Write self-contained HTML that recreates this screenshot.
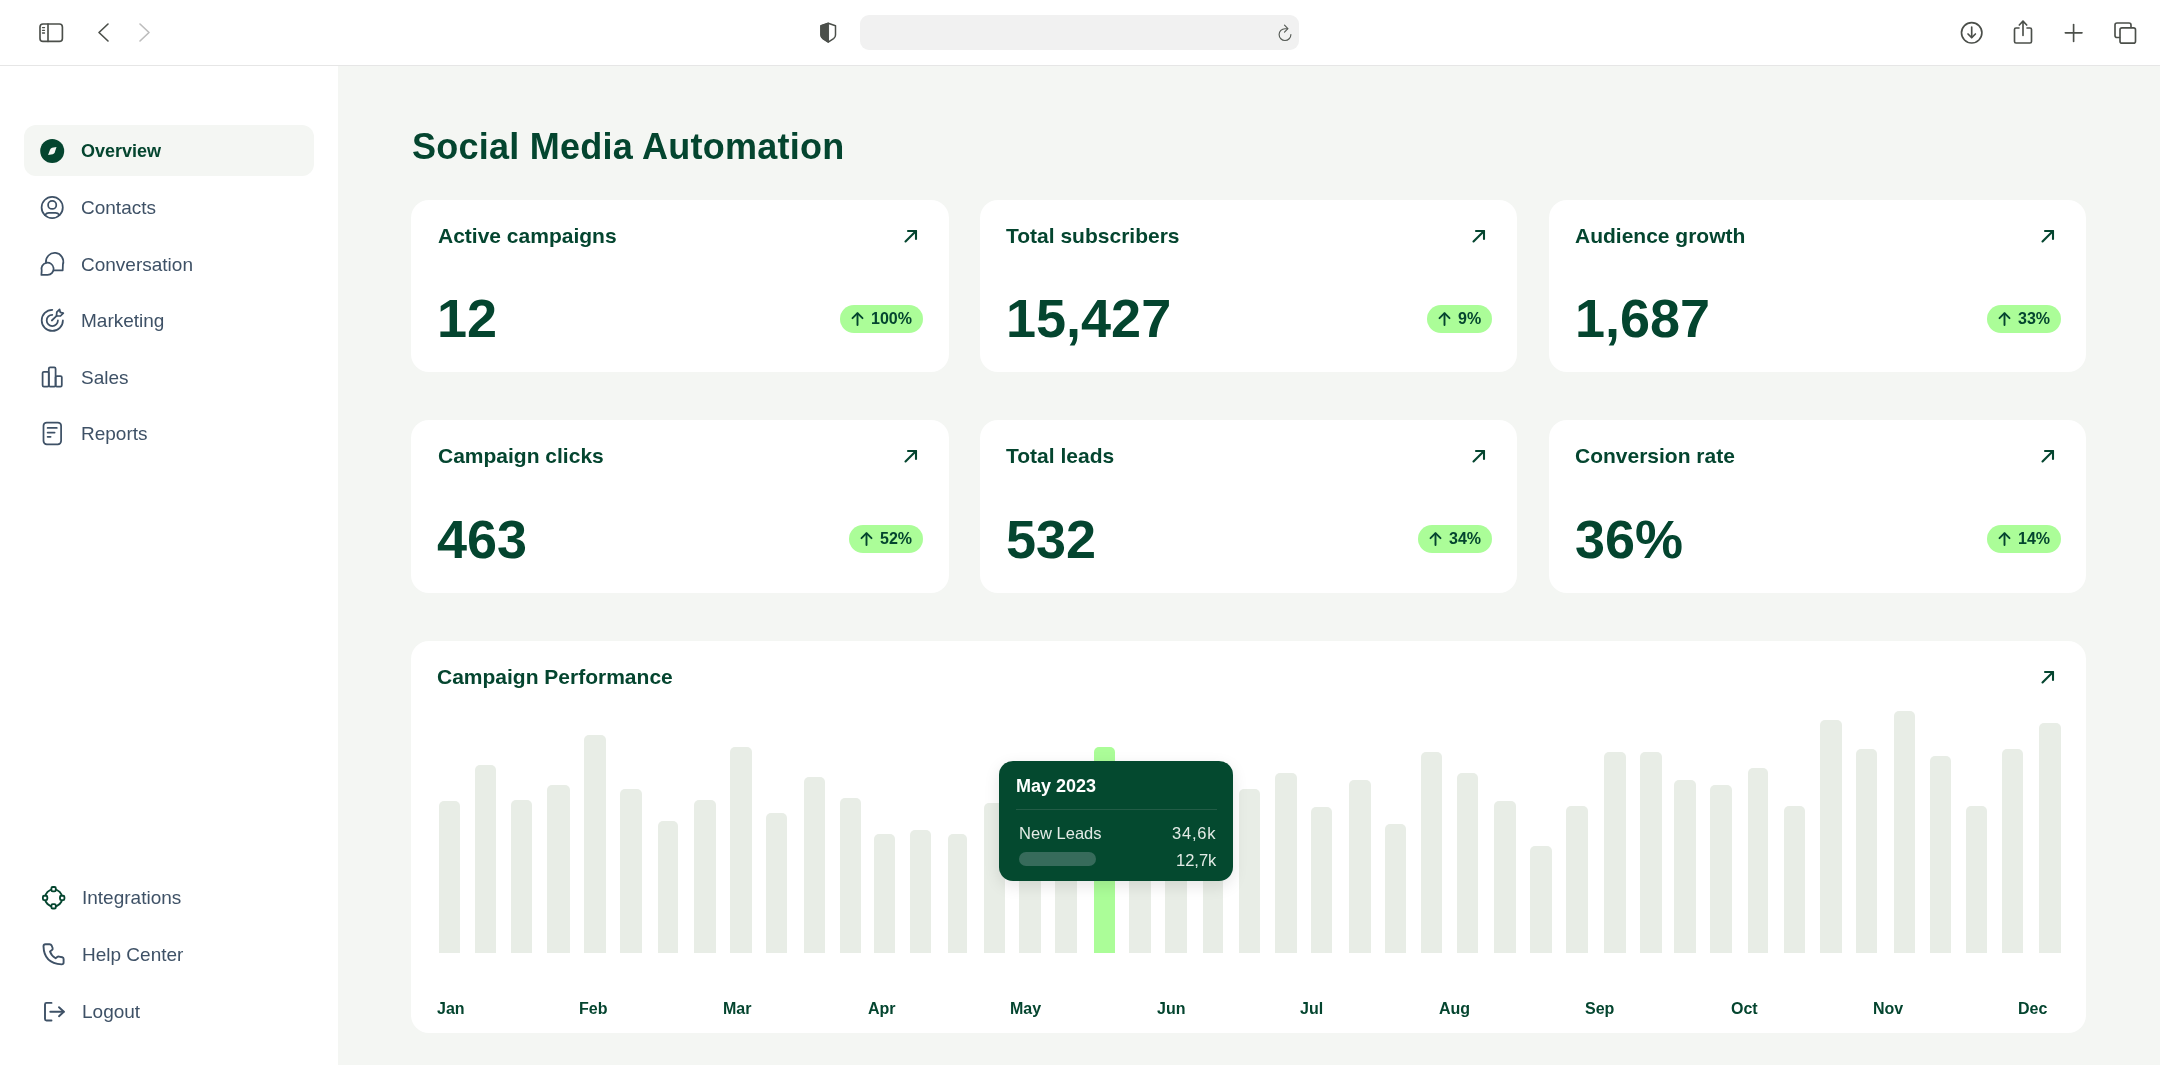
<!DOCTYPE html>
<html><head><meta charset="utf-8"><title>Social Media Automation</title>
<style>
*{margin:0;padding:0;box-sizing:border-box}
html,body{width:2160px;height:1065px;overflow:hidden;background:#fff;font-family:"Liberation Sans",sans-serif}
.a{position:absolute}
.t{position:absolute;line-height:1;white-space:nowrap;will-change:transform}
svg{position:absolute;overflow:visible}
</style></head><body>
<div class="a" style="left:0;top:0;width:2160px;height:65px;background:#fff"></div><div class="a" style="left:0;top:64.6px;width:2160px;height:1.5px;background:#e6e6e6"></div><div class="a" style="left:337.5px;top:66px;width:1822.5px;height:999px;background:#f4f6f3"></div><svg style="left:0;top:0" width="2160" height="65" viewBox="0 0 2160 65" fill="none" stroke="#4b4f4a" stroke-width="1.65" stroke-linecap="round" stroke-linejoin="round">
<rect x="40" y="24" width="22.4" height="17.4" rx="3"/>
<line x1="48" y1="24" x2="48" y2="41.5"/>
<line x1="42.5" y1="27.6" x2="44.5" y2="27.6" stroke-width="1.3"/>
<line x1="42.5" y1="30.3" x2="44.5" y2="30.3" stroke-width="1.3"/>
<line x1="42.5" y1="33" x2="44.5" y2="33" stroke-width="1.3"/>
<polyline points="108,24 99,32.5 108,41"/>
<polyline points="140,24 149,32.5 140,41" stroke="#bdbdbd"/>
<path d="M828.2,23.2 L835.5,25.7 L835.5,35 Q835.5,37.2 833.6,38.6 L828.2,42.1 L822.8,38.6 Q820.9,37.2 820.9,35 L820.9,25.7 Z" stroke-width="1.5"/>
<path d="M828.2,23.2 L820.9,25.7 L820.9,35 Q820.9,37.2 822.8,38.6 L828.2,42.1 Z" fill="#4b4f4a" stroke="#4b4f4a" stroke-width="1"/>
<circle cx="1971.7" cy="32.8" r="10.2" stroke-width="1.65"/>
<polyline points="1971.7,27 1971.7,37.5" stroke-width="1.65"/>
<polyline points="1968,34 1971.7,37.6 1975.4,34" stroke-width="1.65"/>
<path d="M2019,28 L2016,28 Q2014.5,28 2014.5,29.5 L2014.5,41.5 Q2014.5,43 2016,43 L2030,43 Q2031.5,43 2031.5,41.5 L2031.5,29.5 Q2031.5,28 2030,28 L2027,28" stroke-width="1.65"/>
<polyline points="2023,35.5 2023,21.5" stroke-width="1.65"/>
<polyline points="2019.3,25 2023,21.2 2026.7,25" stroke-width="1.65"/>
<line x1="2073.6" y1="24.5" x2="2073.6" y2="41.5" stroke-width="1.65"/>
<line x1="2065.3" y1="32.8" x2="2082" y2="32.8" stroke-width="1.65"/>
<path d="M2119.5,37.5 L2117,37.5 Q2115,37.5 2115,35.5 L2115,25 Q2115,23 2117,23 L2129,23 Q2131,23 2131,25 L2131,27.5" stroke-width="1.65"/>
<rect x="2120" y="27.8" width="15.5" height="15.4" rx="2" stroke-width="1.65"/>
</svg>
<div class="a" style="left:860px;top:15px;width:439px;height:34.5px;border-radius:9px;background:#f1f1f1"></div><svg style="left:1276px;top:24px" width="18" height="18" viewBox="0 0 18 18" fill="none" stroke="#555a55" stroke-width="1.15" stroke-linecap="round" stroke-linejoin="round">
<path d="M14.9,10.6 A5.9,5.9 0 1 1 9,4.7 L11.6,4.7"/>
<polyline points="8.5,1.2 11.9,4.7 8.5,8.1"/>
</svg>
<div class="a" style="left:24px;top:125px;width:290px;height:51px;border-radius:12px;background:#f4f6f3"></div><div class="t" style="left:81px;top:142.36px;font-size:18px;font-weight:700;color:#04452f;">Overview</div>
<div class="t" style="left:81px;top:198.12px;font-size:19px;font-weight:400;color:#3e5166;">Contacts</div>
<div class="t" style="left:81px;top:254.72px;font-size:19px;font-weight:400;color:#3e5166;">Conversation</div>
<div class="t" style="left:81px;top:311.32px;font-size:19px;font-weight:400;color:#3e5166;">Marketing</div>
<div class="t" style="left:81px;top:367.72px;font-size:19px;font-weight:400;color:#3e5166;">Sales</div>
<div class="t" style="left:81px;top:424.12px;font-size:19px;font-weight:400;color:#3e5166;">Reports</div>
<svg style="left:0;top:0" width="338" height="1065" viewBox="0 0 338 1065" fill="none" stroke="#3e5166" stroke-width="1.75" stroke-linecap="round" stroke-linejoin="round">
<circle cx="52.2" cy="151" r="12" fill="#04452f" stroke="none"/>
<path d="M48.1,155.1 L50,149.7 Q50.6,148.2 52.1,147.8 L56.5,146.9 L54.8,152.3 Q54.3,153.8 52.7,154.3 Z" fill="#f4f6f3" stroke="none"/>
<circle cx="52.2" cy="207.5" r="10.6"/>
<circle cx="52.2" cy="204.9" r="4.1"/>
<path d="M44.9,215 Q46.6,212.9 48.8,212.9 L55.6,212.9 Q57.8,212.9 59.5,215"/>
<path d="M46,262.6 A8.7,8.7 0 1 1 62.9,264.4 L62.7,270.3 L53.7,270.3"/>
<path d="M41.7,270.6 A6.1,6.1 0 1 1 47.6,274.9 L41.4,274.9 Z"/>
<path d="M52.3,309.8 A10.6,10.6 0 1 0 62.9,320.4"/>
<path d="M52.3,314.8 A5.6,5.6 0 1 0 57.9,320.4"/>
<line x1="51.8" y1="320.5" x2="56.6" y2="315.9"/>
<path d="M56.5,315.8 L56.8,312.2 L59.6,309.4 L60.3,312.4 L63.3,313.2 L60.5,316 Z"/>
<rect x="42.6" y="371.8" width="6.2" height="14.8" rx="1.3"/>
<rect x="48.8" y="367.4" width="6.8" height="19.2" rx="1.3"/>
<rect x="55.6" y="376" width="6.2" height="10.6" rx="1.3"/>
<rect x="43.5" y="422.5" width="17.6" height="21.8" rx="3.3"/>
<line x1="47.6" y1="427.9" x2="56.8" y2="427.9"/>
<line x1="47.6" y1="432.5" x2="54.6" y2="432.5"/>
<line x1="47.6" y1="436.8" x2="50.6" y2="436.8"/>
<g stroke="#04452f" stroke-width="1.85">
<circle cx="53.6" cy="897.9" r="8.6"/>
<rect x="51.4" y="887" width="4.4" height="4.4" rx="1.3" fill="#fff"/>
<rect x="51.4" y="904.1" width="4.4" height="4.4" rx="1.3" fill="#fff"/>
<rect x="42.9" y="895.7" width="4.4" height="4.4" rx="1.3" fill="#fff"/>
<rect x="60" y="895.7" width="4.4" height="4.4" rx="1.3" fill="#fff"/>
</g>
<g stroke-width="1.9">
<path d="M45.5,944.2 L49.5,944.2 Q51,944.2 51.6,945.5 L52.6,948 Q53,949.3 52,950 L50,951.5 Q51.2,955.5 55.6,958.2 L57.2,957 Q58,956.4 59,956.6 L62.3,957.3 Q63.6,957.6 63.6,959 L63.6,962.6 Q63.6,964.4 61.6,964.4 Q44,963.5 43.5,946.3 Q43.5,944.2 45.5,944.2 Z"/>
<path d="M51.5,1002.9 L46.5,1002.9 Q45,1002.9 45,1004.4 L45,1019 Q45,1020.5 46.5,1020.5 L51.5,1020.5"/>
<line x1="50.3" y1="1011.7" x2="63.8" y2="1011.7"/>
<polyline points="59,1007.2 63.8,1011.7 59,1016.2"/>
</g>
</svg>
<div class="t" style="left:82.4px;top:888.22px;font-size:19px;font-weight:400;color:#3e5166;">Integrations</div>
<div class="t" style="left:82.4px;top:944.62px;font-size:19px;font-weight:400;color:#3e5166;">Help Center</div>
<div class="t" style="left:82.4px;top:1002.12px;font-size:19px;font-weight:400;color:#3e5166;">Logout</div>
<div class="t" style="left:412px;top:128.53px;font-size:36px;font-weight:700;color:#04452f;letter-spacing:0.25px;">Social Media Automation</div>
<div class="a" style="left:411px;top:199.6px;width:537.8px;height:172.7px;border-radius:18px;background:#fff"></div><div class="t" style="left:437.5px;top:224.72px;font-size:21px;font-weight:700;color:#04452f;">Active campaigns</div>
<div class="t" style="left:437px;top:291.49px;font-size:54px;font-weight:700;color:#04452f;">12</div>
<svg style="left:903.5px;top:228.6px" width="14" height="14" viewBox="0 0 14 14" fill="none" stroke="#04452f" stroke-width="2.1" stroke-linecap="round" stroke-linejoin="round"><line x1="1.5" y1="12.5" x2="12" y2="2"/><polyline points="4,2 12,2 12,10"/></svg><div class="a" style="right:1236.9px;top:304.6px;height:28px;border-radius:14px;background:#abfd98;display:flex;align-items:center;padding:0 11px 0 11px;will-change:transform"><svg style="position:relative" width="13" height="14" viewBox="0 0 13 14" fill="none" stroke="#04452f" stroke-width="1.9" stroke-linecap="round" stroke-linejoin="round"><line x1="6.5" y1="1.5" x2="6.5" y2="13"/><polyline points="1.5,6.2 6.5,1.2 11.5,6.2"/></svg><span style="font-size:16px;font-weight:700;color:#04452f;margin-left:7px;line-height:1">100%</span></div>
<div class="a" style="left:979.6px;top:199.6px;width:537.8px;height:172.7px;border-radius:18px;background:#fff"></div><div class="t" style="left:1006.1px;top:224.72px;font-size:21px;font-weight:700;color:#04452f;">Total subscribers</div>
<div class="t" style="left:1005.6px;top:291.49px;font-size:54px;font-weight:700;color:#04452f;">15,427</div>
<svg style="left:1472.1px;top:228.6px" width="14" height="14" viewBox="0 0 14 14" fill="none" stroke="#04452f" stroke-width="2.1" stroke-linecap="round" stroke-linejoin="round"><line x1="1.5" y1="12.5" x2="12" y2="2"/><polyline points="4,2 12,2 12,10"/></svg><div class="a" style="right:668.3px;top:304.6px;height:28px;border-radius:14px;background:#abfd98;display:flex;align-items:center;padding:0 11px 0 11px;will-change:transform"><svg style="position:relative" width="13" height="14" viewBox="0 0 13 14" fill="none" stroke="#04452f" stroke-width="1.9" stroke-linecap="round" stroke-linejoin="round"><line x1="6.5" y1="1.5" x2="6.5" y2="13"/><polyline points="1.5,6.2 6.5,1.2 11.5,6.2"/></svg><span style="font-size:16px;font-weight:700;color:#04452f;margin-left:7px;line-height:1">9%</span></div>
<div class="a" style="left:1548.5px;top:199.6px;width:537.8px;height:172.7px;border-radius:18px;background:#fff"></div><div class="t" style="left:1575.0px;top:224.72px;font-size:21px;font-weight:700;color:#04452f;">Audience growth</div>
<div class="t" style="left:1574.5px;top:291.49px;font-size:54px;font-weight:700;color:#04452f;">1,687</div>
<svg style="left:2041.0px;top:228.6px" width="14" height="14" viewBox="0 0 14 14" fill="none" stroke="#04452f" stroke-width="2.1" stroke-linecap="round" stroke-linejoin="round"><line x1="1.5" y1="12.5" x2="12" y2="2"/><polyline points="4,2 12,2 12,10"/></svg><div class="a" style="right:99.39999999999964px;top:304.6px;height:28px;border-radius:14px;background:#abfd98;display:flex;align-items:center;padding:0 11px 0 11px;will-change:transform"><svg style="position:relative" width="13" height="14" viewBox="0 0 13 14" fill="none" stroke="#04452f" stroke-width="1.9" stroke-linecap="round" stroke-linejoin="round"><line x1="6.5" y1="1.5" x2="6.5" y2="13"/><polyline points="1.5,6.2 6.5,1.2 11.5,6.2"/></svg><span style="font-size:16px;font-weight:700;color:#04452f;margin-left:7px;line-height:1">33%</span></div>
<div class="a" style="left:411px;top:420.1px;width:537.8px;height:172.7px;border-radius:18px;background:#fff"></div><div class="t" style="left:437.5px;top:445.22px;font-size:21px;font-weight:700;color:#04452f;">Campaign clicks</div>
<div class="t" style="left:437px;top:511.99px;font-size:54px;font-weight:700;color:#04452f;">463</div>
<svg style="left:903.5px;top:449.1px" width="14" height="14" viewBox="0 0 14 14" fill="none" stroke="#04452f" stroke-width="2.1" stroke-linecap="round" stroke-linejoin="round"><line x1="1.5" y1="12.5" x2="12" y2="2"/><polyline points="4,2 12,2 12,10"/></svg><div class="a" style="right:1236.9px;top:525.1px;height:28px;border-radius:14px;background:#abfd98;display:flex;align-items:center;padding:0 11px 0 11px;will-change:transform"><svg style="position:relative" width="13" height="14" viewBox="0 0 13 14" fill="none" stroke="#04452f" stroke-width="1.9" stroke-linecap="round" stroke-linejoin="round"><line x1="6.5" y1="1.5" x2="6.5" y2="13"/><polyline points="1.5,6.2 6.5,1.2 11.5,6.2"/></svg><span style="font-size:16px;font-weight:700;color:#04452f;margin-left:7px;line-height:1">52%</span></div>
<div class="a" style="left:979.6px;top:420.1px;width:537.8px;height:172.7px;border-radius:18px;background:#fff"></div><div class="t" style="left:1006.1px;top:445.22px;font-size:21px;font-weight:700;color:#04452f;">Total leads</div>
<div class="t" style="left:1005.6px;top:511.99px;font-size:54px;font-weight:700;color:#04452f;">532</div>
<svg style="left:1472.1px;top:449.1px" width="14" height="14" viewBox="0 0 14 14" fill="none" stroke="#04452f" stroke-width="2.1" stroke-linecap="round" stroke-linejoin="round"><line x1="1.5" y1="12.5" x2="12" y2="2"/><polyline points="4,2 12,2 12,10"/></svg><div class="a" style="right:668.3px;top:525.1px;height:28px;border-radius:14px;background:#abfd98;display:flex;align-items:center;padding:0 11px 0 11px;will-change:transform"><svg style="position:relative" width="13" height="14" viewBox="0 0 13 14" fill="none" stroke="#04452f" stroke-width="1.9" stroke-linecap="round" stroke-linejoin="round"><line x1="6.5" y1="1.5" x2="6.5" y2="13"/><polyline points="1.5,6.2 6.5,1.2 11.5,6.2"/></svg><span style="font-size:16px;font-weight:700;color:#04452f;margin-left:7px;line-height:1">34%</span></div>
<div class="a" style="left:1548.5px;top:420.1px;width:537.8px;height:172.7px;border-radius:18px;background:#fff"></div><div class="t" style="left:1575.0px;top:445.22px;font-size:21px;font-weight:700;color:#04452f;">Conversion rate</div>
<div class="t" style="left:1574.5px;top:511.99px;font-size:54px;font-weight:700;color:#04452f;">36%</div>
<svg style="left:2041.0px;top:449.1px" width="14" height="14" viewBox="0 0 14 14" fill="none" stroke="#04452f" stroke-width="2.1" stroke-linecap="round" stroke-linejoin="round"><line x1="1.5" y1="12.5" x2="12" y2="2"/><polyline points="4,2 12,2 12,10"/></svg><div class="a" style="right:99.39999999999964px;top:525.1px;height:28px;border-radius:14px;background:#abfd98;display:flex;align-items:center;padding:0 11px 0 11px;will-change:transform"><svg style="position:relative" width="13" height="14" viewBox="0 0 13 14" fill="none" stroke="#04452f" stroke-width="1.9" stroke-linecap="round" stroke-linejoin="round"><line x1="6.5" y1="1.5" x2="6.5" y2="13"/><polyline points="1.5,6.2 6.5,1.2 11.5,6.2"/></svg><span style="font-size:16px;font-weight:700;color:#04452f;margin-left:7px;line-height:1">14%</span></div>
<div class="a" style="left:411px;top:640.7px;width:1675.2px;height:392px;border-radius:18px;background:#fff"></div><div class="t" style="left:436.6px;top:665.72px;font-size:21px;font-weight:700;color:#04452f;">Campaign Performance</div>
<svg style="left:2041px;top:669.7px" width="14" height="14" viewBox="0 0 14 14" fill="none" stroke="#04452f" stroke-width="2.1" stroke-linecap="round" stroke-linejoin="round"><line x1="1.5" y1="12.5" x2="12" y2="2"/><polyline points="4,2 12,2 12,10"/></svg><div class="a" style="left:438.8px;top:800.9px;width:21.20px;height:151.80px;border-radius:5px 5px 0 0;background:#e8ede6"></div><div class="a" style="left:474.7px;top:765.2px;width:21.20px;height:187.50px;border-radius:5px 5px 0 0;background:#e8ede6"></div><div class="a" style="left:510.6px;top:799.6px;width:21.20px;height:153.10px;border-radius:5px 5px 0 0;background:#e8ede6"></div><div class="a" style="left:546.5px;top:784.7px;width:23.30px;height:168.00px;border-radius:5px 5px 0 0;background:#e8ede6"></div><div class="a" style="left:584.2px;top:734.9px;width:21.60px;height:217.80px;border-radius:5px 5px 0 0;background:#e8ede6"></div><div class="a" style="left:620.1px;top:789.1px;width:21.70px;height:163.60px;border-radius:5px 5px 0 0;background:#e8ede6"></div><div class="a" style="left:657.9px;top:820.6px;width:20.00px;height:132.10px;border-radius:5px 5px 0 0;background:#e8ede6"></div><div class="a" style="left:694.0px;top:799.6px;width:21.70px;height:153.10px;border-radius:5px 5px 0 0;background:#e8ede6"></div><div class="a" style="left:730.1px;top:747.1px;width:21.50px;height:205.60px;border-radius:5px 5px 0 0;background:#e8ede6"></div><div class="a" style="left:766.0px;top:813.1px;width:21.30px;height:139.60px;border-radius:5px 5px 0 0;background:#e8ede6"></div><div class="a" style="left:803.9px;top:777.2px;width:21.20px;height:175.50px;border-radius:5px 5px 0 0;background:#e8ede6"></div><div class="a" style="left:840.0px;top:798.3px;width:21.00px;height:154.40px;border-radius:5px 5px 0 0;background:#e8ede6"></div><div class="a" style="left:874.0px;top:834.3px;width:21.20px;height:118.40px;border-radius:5px 5px 0 0;background:#e8ede6"></div><div class="a" style="left:910.0px;top:830.0px;width:21.00px;height:122.70px;border-radius:5px 5px 0 0;background:#e8ede6"></div><div class="a" style="left:947.9px;top:834.3px;width:19.00px;height:118.40px;border-radius:5px 5px 0 0;background:#e8ede6"></div><div class="a" style="left:984.0px;top:803.1px;width:21.00px;height:149.60px;border-radius:5px 5px 0 0;background:#e8ede6"></div><div class="a" style="left:1019.3px;top:812px;width:21.70px;height:140.70px;border-radius:5px 5px 0 0;background:#e8ede6"></div><div class="a" style="left:1055.4px;top:790px;width:21.50px;height:162.70px;border-radius:5px 5px 0 0;background:#e8ede6"></div><div class="a" style="left:1093.75px;top:747.3px;width:20.85px;height:205.40px;border-radius:5px 5px 0 0;background:#abfd98"></div><div class="a" style="left:1129.0px;top:800px;width:21.80px;height:152.70px;border-radius:5px 5px 0 0;background:#e8ede6"></div><div class="a" style="left:1165.0px;top:790px;width:21.80px;height:162.70px;border-radius:5px 5px 0 0;background:#e8ede6"></div><div class="a" style="left:1203.1px;top:805px;width:19.80px;height:147.70px;border-radius:5px 5px 0 0;background:#e8ede6"></div><div class="a" style="left:1239.0px;top:789.4px;width:21.40px;height:163.30px;border-radius:5px 5px 0 0;background:#e8ede6"></div><div class="a" style="left:1275.0px;top:772.9px;width:21.50px;height:179.80px;border-radius:5px 5px 0 0;background:#e8ede6"></div><div class="a" style="left:1311.0px;top:807.4px;width:21.30px;height:145.30px;border-radius:5px 5px 0 0;background:#e8ede6"></div><div class="a" style="left:1348.75px;top:780.0px;width:22.05px;height:172.70px;border-radius:5px 5px 0 0;background:#e8ede6"></div><div class="a" style="left:1384.8px;top:823.9px;width:21.20px;height:128.80px;border-radius:5px 5px 0 0;background:#e8ede6"></div><div class="a" style="left:1421.0px;top:751.6px;width:20.80px;height:201.10px;border-radius:5px 5px 0 0;background:#e8ede6"></div><div class="a" style="left:1456.9px;top:772.9px;width:21.00px;height:179.80px;border-radius:5px 5px 0 0;background:#e8ede6"></div><div class="a" style="left:1494.2px;top:801.1px;width:21.60px;height:151.60px;border-radius:5px 5px 0 0;background:#e8ede6"></div><div class="a" style="left:1530.2px;top:846.4px;width:21.50px;height:106.30px;border-radius:5px 5px 0 0;background:#e8ede6"></div><div class="a" style="left:1566.25px;top:805.9px;width:21.65px;height:146.80px;border-radius:5px 5px 0 0;background:#e8ede6"></div><div class="a" style="left:1604.2px;top:751.6px;width:21.50px;height:201.10px;border-radius:5px 5px 0 0;background:#e8ede6"></div><div class="a" style="left:1640.0px;top:751.6px;width:21.70px;height:201.10px;border-radius:5px 5px 0 0;background:#e8ede6"></div><div class="a" style="left:1674.1px;top:780.0px;width:21.70px;height:172.70px;border-radius:5px 5px 0 0;background:#e8ede6"></div><div class="a" style="left:1710.1px;top:784.6px;width:21.70px;height:168.10px;border-radius:5px 5px 0 0;background:#e8ede6"></div><div class="a" style="left:1748.0px;top:768.1px;width:19.80px;height:184.60px;border-radius:5px 5px 0 0;background:#e8ede6"></div><div class="a" style="left:1784.0px;top:805.9px;width:21.30px;height:146.80px;border-radius:5px 5px 0 0;background:#e8ede6"></div><div class="a" style="left:1820.0px;top:720.2px;width:21.50px;height:232.50px;border-radius:5px 5px 0 0;background:#e8ede6"></div><div class="a" style="left:1856.0px;top:748.8px;width:21.30px;height:203.90px;border-radius:5px 5px 0 0;background:#e8ede6"></div><div class="a" style="left:1893.5px;top:711.3px;width:21.50px;height:241.40px;border-radius:5px 5px 0 0;background:#e8ede6"></div><div class="a" style="left:1929.8px;top:756.2px;width:21.20px;height:196.50px;border-radius:5px 5px 0 0;background:#e8ede6"></div><div class="a" style="left:1965.5px;top:805.9px;width:21.50px;height:146.80px;border-radius:5px 5px 0 0;background:#e8ede6"></div><div class="a" style="left:2001.5px;top:748.8px;width:21.50px;height:203.90px;border-radius:5px 5px 0 0;background:#e8ede6"></div><div class="a" style="left:2039.3px;top:723.0px;width:21.60px;height:229.70px;border-radius:5px 5px 0 0;background:#e8ede6"></div><div class="t" style="left:436.7px;top:1000.66px;font-size:16px;font-weight:700;color:#04452f;">Jan</div>
<div class="t" style="left:579.1px;top:1000.66px;font-size:16px;font-weight:700;color:#04452f;">Feb</div>
<div class="t" style="left:723px;top:1000.66px;font-size:16px;font-weight:700;color:#04452f;">Mar</div>
<div class="t" style="left:868px;top:1000.66px;font-size:16px;font-weight:700;color:#04452f;">Apr</div>
<div class="t" style="left:1010px;top:1000.66px;font-size:16px;font-weight:700;color:#04452f;">May</div>
<div class="t" style="left:1157px;top:1000.66px;font-size:16px;font-weight:700;color:#04452f;">Jun</div>
<div class="t" style="left:1300.4px;top:1000.66px;font-size:16px;font-weight:700;color:#04452f;">Jul</div>
<div class="t" style="left:1438.5px;top:1000.66px;font-size:16px;font-weight:700;color:#04452f;">Aug</div>
<div class="t" style="left:1585.2px;top:1000.66px;font-size:16px;font-weight:700;color:#04452f;">Sep</div>
<div class="t" style="left:1730.6px;top:1000.66px;font-size:16px;font-weight:700;color:#04452f;">Oct</div>
<div class="t" style="left:1873px;top:1000.66px;font-size:16px;font-weight:700;color:#04452f;">Nov</div>
<div class="t" style="left:2017.7px;top:1000.66px;font-size:16px;font-weight:700;color:#04452f;">Dec</div>
<div class="a" style="left:999.1px;top:761.2px;width:234.3px;height:119.5px;border-radius:14px;background:#04492f;box-shadow:0 5px 16px rgba(0,0,0,0.10)"></div><div class="t" style="left:1015.6px;top:776.66px;font-size:18px;font-weight:700;color:#ffffff;">May 2023</div>
<div class="a" style="left:1015.6px;top:808.7px;width:201.8px;height:1px;background:#225c46"></div><div class="t" style="left:1019.4px;top:825.13px;font-size:16.5px;font-weight:400;color:#e3ebe6;">New Leads</div>
<div class="t" style="right:943.2px;top:825.13px;font-size:16.5px;font-weight:400;color:#e3ebe6;letter-spacing:0.8px;">34,6k</div>
<div class="a" style="left:1018.9px;top:852.3px;width:76.8px;height:13.4px;border-radius:7px;background:#376b5b"></div><div class="t" style="right:943.3px;top:851.53px;font-size:16.5px;font-weight:400;color:#e3ebe6;">12,7k</div>
</body></html>
